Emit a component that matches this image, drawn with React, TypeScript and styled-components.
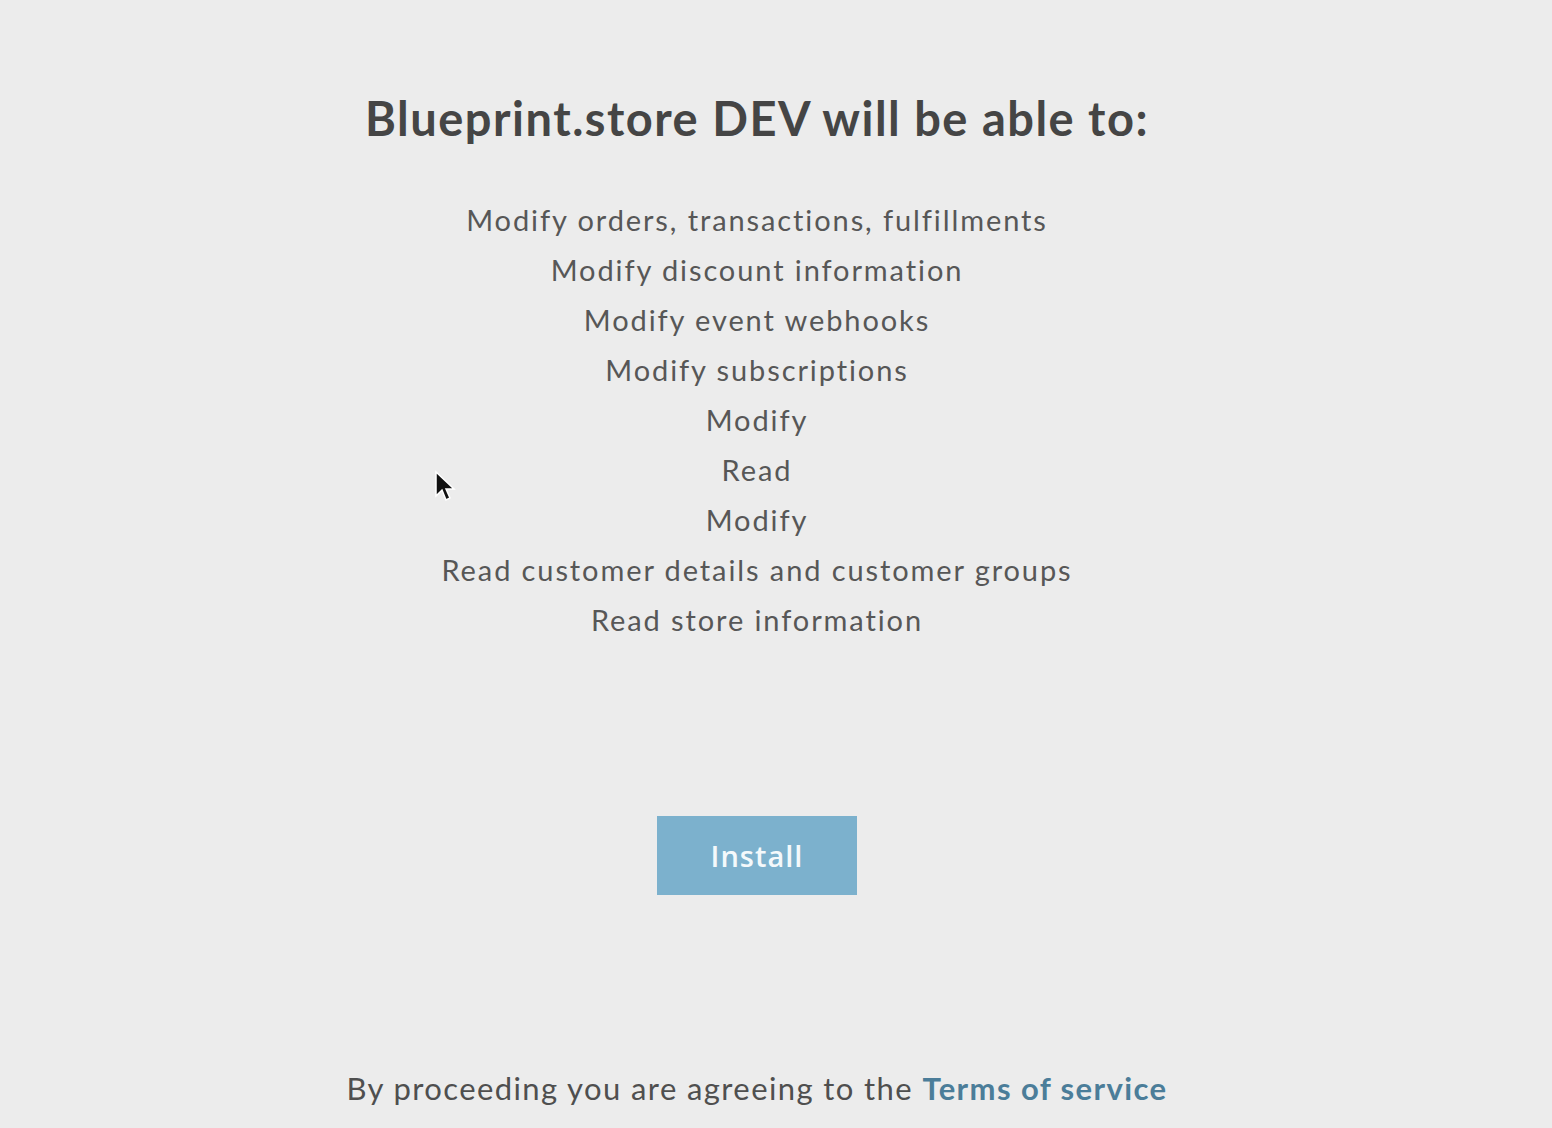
import * as React from "react";
import styled, { createGlobalStyle } from "styled-components";

const GlobalStyle = createGlobalStyle`
  html, body {
    margin: 0;
    padding: 0;
    background: #ececec;
  }
  body {
    font-family: Lato, "Open Sans", sans-serif;
  }
`;

const Page = styled.div`
  position: relative;
  height: 1128px;
  padding-right: 38px;
  display: flex;
  flex-direction: column;
  align-items: center;
  overflow: hidden;
`;

const Title = styled.h1`
  margin: 90px 0 0;
  font-size: 47px;
  font-weight: 700;
  letter-spacing: 1.5px;
  color: #454545;
  line-height: 56px;
`;

const PermissionList = styled.ul`
  list-style: none;
  margin: 49px 0 0;
  padding: 0;
  text-align: center;
`;

const Permission = styled.li`
  font-size: 29px;
  line-height: 50px;
  letter-spacing: 1.9px;
  color: #575757;
  font-weight: 400;
`;

const InstallButton = styled.button`
  margin-top: 171px;
  width: 200px;
  height: 79px;
  border: none;
  background: #7cb1cd;
  color: #f4f9fb;
  font-family: "Open Sans", sans-serif;
  font-size: 29px;
  font-weight: 600;
  letter-spacing: 1px;
  cursor: pointer;
`;

const Footer = styled.p`
  margin: 174px 0 0;
  font-size: 31px;
  letter-spacing: 1.4px;
  color: #4f4f4f;
`;

const TermsLink = styled.a`
  color: #4b7d99;
  font-weight: 700;
  text-decoration: none;
`;

const Pointer = styled.svg`
  position: absolute;
  left: 434px;
  top: 470px;
`;

const permissions = [
  "Modify orders, transactions, fulfillments",
  "Modify discount information",
  "Modify event webhooks",
  "Modify subscriptions",
  "Modify",
  "Read",
  "Modify",
  "Read customer details and customer groups",
  "Read store information",
];

const App = (): React.ReactElement => {
  return (
    <Page>
      <GlobalStyle />
      <Title>Blueprint.store DEV will be able to:</Title>
      <PermissionList>
        {permissions.map((p, i) => (
          <Permission key={i}>{p}</Permission>
        ))}
      </PermissionList>
      <InstallButton>Install</InstallButton>
      <Footer>
        By proceeding you are agreeing to the{" "}
        <TermsLink href="#">Terms of service</TermsLink>
      </Footer>
      <Pointer width="22" height="34" viewBox="0 0 22 34">
        <path d="M2 2 L2 26 L8 20 L12 30 L16 28 L12 19 L20 19 Z" fill="#111" stroke="#fff" strokeWidth="1.5" />
      </Pointer>
    </Page>
  );
};

export default App;
